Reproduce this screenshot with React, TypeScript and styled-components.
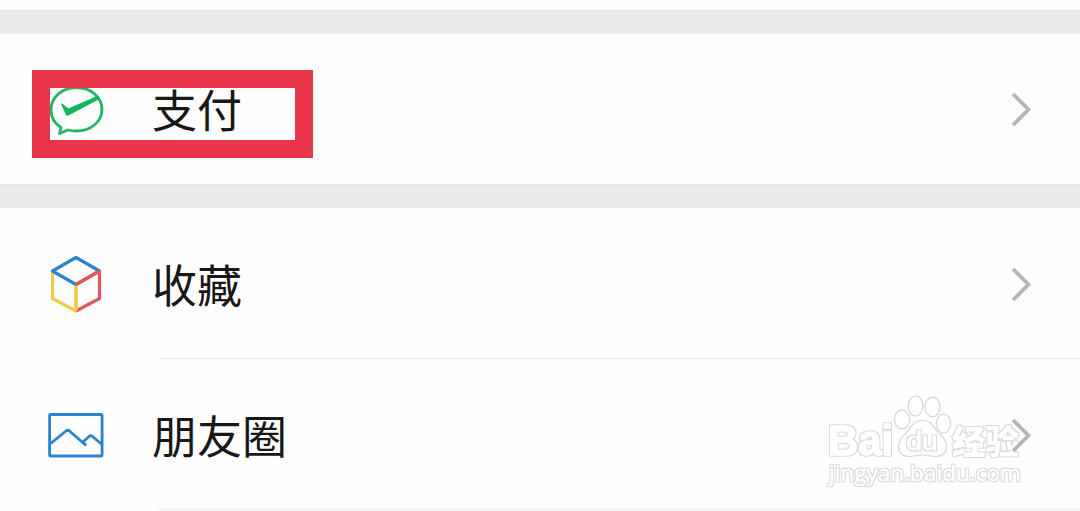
import React from 'react';
import styled, { createGlobalStyle } from 'styled-components';

const GlobalStyle = createGlobalStyle`
  body {
    margin: 0;
    background: #fefefe;
    font-family: 'Noto Sans CJK SC', sans-serif;
  }
`;

const Page = styled.main`
  position: relative;
  width: 1080px;
  height: 511px;
  padding-top: 10px;
  box-sizing: border-box;
  overflow: hidden;
`;

const Gap = styled.div`
  height: 24px;
  box-sizing: border-box;
  background: #ebebeb;
  border-top: 1px solid #e4e4e4;
  border-bottom: 1px solid #eeeeee;
`;

const Row = styled.div<{ $height: number }>`
  position: relative;
  display: flex;
  height: ${({ $height }) => $height}px;
  padding-left: 48px;
`;

const IconBox = styled.div`
  display: flex;
  align-items: center;
  width: 56px;
  margin-right: 48px;

  svg {
    display: block;
    overflow: visible;
  }
`;

const RowBody = styled.div<{ $divider?: boolean }>`
  flex: 1;
  display: flex;
  align-items: center;
  justify-content: space-between;
  padding-right: 47px;
  background: ${({ $divider }) =>
    $divider ? 'linear-gradient(#e9e9e9, #e9e9e9) 7px 100% / 100% 1px no-repeat' : 'none'};
`;

const Label = styled.span`
  color: #181818;
  font-size: 45px;
  line-height: 60px;
`;

const Highlight = styled.div`
  position: absolute;
  left: 32px;
  top: 36px;
  width: 281px;
  height: 88px;
  box-sizing: border-box;
  border: 18px solid #e93549;
`;

// Sits over the lower right corner, under the row arrows
const Watermark = styled.svg`
  position: absolute;
  left: 820px;
  top: 385px;
`;

const ArrowBox = styled.div`
  position: relative;
  z-index: 1;
  display: flex;
  margin-top: 2px;
`;

const PayIcon = () => (
  <svg width="56" height="56" viewBox="0 0 56 56" fill="none">
    <path
      d="M13 46.5C6.500 42.500 3 36 3 29C3 16.500 14 6.500 28.500 6.500S54 16.500 54 28.500S43 50 28.500 50C25.500 50 22.500 49.700 19.800 49L11.500 52.500Z"
      stroke="#22b565"
      strokeWidth="2.8"
      strokeLinejoin="round"
    />
    <path
      d="M14.200 22.500L20.300 27.500L48.500 15.200Q51.500 15 51.500 18L20.500 34.500Q18.800 35.500 17.800 33.500L13.200 23.500Q13.200 22 14.200 22.500Z"
      fill="#17b35c"
    />
  </svg>
);

const CubeIcon = () => (
  <svg width="56" height="58" viewBox="0 0 56 58" fill="none" strokeWidth="3.2" strokeLinejoin="round">
    <path d="M4.500 16V43.500L28 56V29.500" stroke="#f2c94a" />
    <path d="M28 29.500L51.500 16V43.500L28 56" stroke="#df5860" />
    <path d="M28 29.500V56" stroke="#f2c94a" />
    <path d="M28 29.500L4.500 16L28 2.500L51.500 16" stroke="#2f83cc" />
    <path d="M28 29.500L51.500 16" stroke="#df5860" />
  </svg>
);

const MomentsIcon = () => (
  <svg width="56" height="46" viewBox="0 0 56 46" fill="none" stroke="#2a83cd" strokeWidth="2.8" strokeLinejoin="round">
    <rect x="1.600" y="2.500" width="52.500" height="41.500" rx="1" />
    <path d="M2 32L18 19Q19.700 17.500 21.500 19L37 32.500H38.500M35 30L41 24.500Q42.700 23 44.500 24.500L54 32.500" />
  </svg>
);

const Chevron = () => (
  <svg width="24" height="40" viewBox="0 0 24 40" fill="none">
    <path d="M4 4L19.500 19.500L4 35" stroke="#b5b5b5" strokeWidth="3.8" />
  </svg>
);

interface ItemProps {
  label: string;
  icon: React.ReactNode;
  height: number;
  divider?: boolean;
  highlighted?: boolean;
}

function Item({ label, icon, height, divider, highlighted }: ItemProps) {
  return (
    <Row $height={height}>
      <IconBox>{icon}</IconBox>
      <RowBody $divider={divider}>
        <Label>{label}</Label>
        <ArrowBox>
          <Chevron />
        </ArrowBox>
      </RowBody>
      {highlighted && <Highlight />}
    </Row>
  );
}

function App() {
  return (
    <>
      <GlobalStyle />
      <Page>
        <Gap />
        <Item label="支付" icon={<PayIcon />} height={150} highlighted />
        <Gap />
        <Item label="收藏" icon={<CubeIcon />} height={151} divider />
        <Item label="朋友圈" icon={<MomentsIcon />} height={151} divider />
        <Watermark width="215" height="110" viewBox="0 0 215 110">
          <defs>
            {/* thin grey rim around white lettering */}
            <filter id="rim" x="-10%" y="-10%" width="120%" height="120%" colorInterpolationFilters="sRGB">
              <feMorphology in="SourceAlpha" operator="dilate" radius="1" result="wide" />
              <feFlood floodColor="#dadada" />
              <feComposite in2="wide" operator="in" result="edge" />
              <feMerge>
                <feMergeNode in="edge" />
                <feMergeNode in="SourceGraphic" />
              </feMerge>
            </filter>
          </defs>
          <g fill="#fff" stroke="#d6d6d6" strokeWidth="1.2">
            <ellipse cx="82" cy="34.300" rx="7.500" ry="9.500" />
            <ellipse cx="95.500" cy="21" rx="7.300" ry="10" />
            <ellipse cx="112.500" cy="22" rx="7.600" ry="9.800" />
            <ellipse cx="123.500" cy="38.500" rx="7.200" ry="9.500" />
            <path d="M102.500 35.500C94 35.500 92 41 88 46C84 50.500 78.500 54 78.500 62C78.500 68 83 71.500 89 71.500C94 71.500 98 70 102.500 70S111 71.500 116 71.500C122 71.500 126.500 68 126.500 62C126.500 54 121 50.500 117 46C113 41 111 35.500 102.500 35.500Z" />
          </g>
          <g fill="#fff" stroke="#fff" strokeLinejoin="round" filter="url(#rim)">
            <text
              x="8"
              y="70"
              fontSize="43"
              fontFamily="Liberation Sans, sans-serif"
              fontWeight="700"
              strokeWidth="1.6"
              textLength="65"
              lengthAdjust="spacingAndGlyphs"
            >
              Bai
            </text>
            <text x="132" y="68.500" fontSize="33.500" fontWeight="900" fontFamily="Noto Sans CJK SC, sans-serif" strokeWidth="0.2">
              经验
            </text>
            <text
              x="9"
              y="96"
              fontSize="22.500"
              fontFamily="Open Sans, sans-serif"
              fontWeight="500"
              strokeWidth="0.4"
              textLength="192"
              lengthAdjust="spacingAndGlyphs"
            >
              jingyan.baidu.com
            </text>
          </g>
          <text
            x="86.500"
            y="65"
            fontSize="26"
            fontFamily="Liberation Sans, sans-serif"
            fill="#fff"
            stroke="#fff"
            strokeWidth="0.8"
            textLength="31"
            lengthAdjust="spacingAndGlyphs"
            filter="url(#rim)"
          >
            du
          </text>
        </Watermark>
      </Page>
    </>
  );
}

export default App;
